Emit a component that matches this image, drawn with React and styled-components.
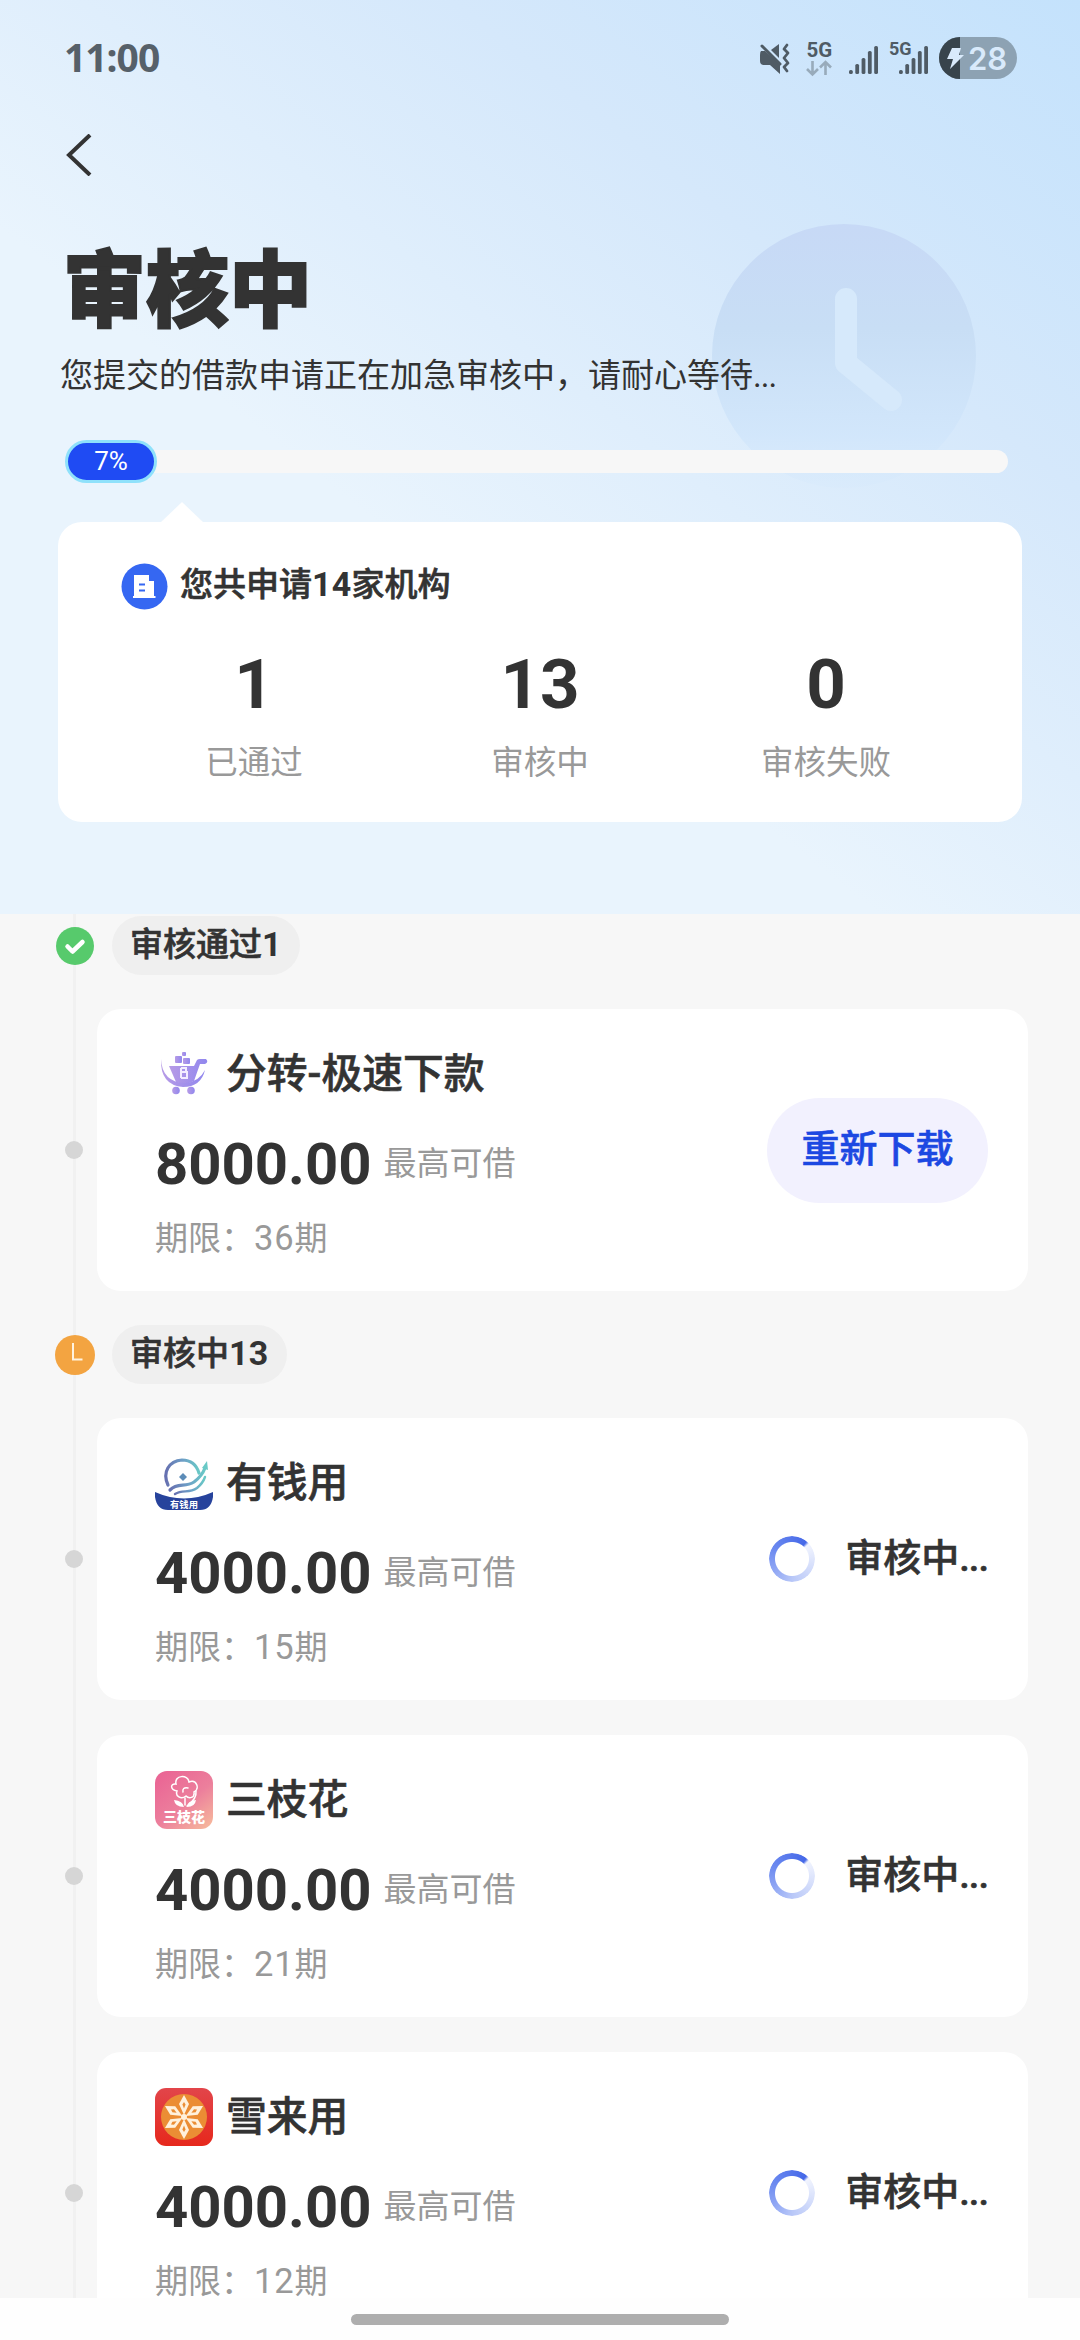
import styled, { createGlobalStyle } from "styled-components";

const GlobalStyle = createGlobalStyle`
  * {
    box-sizing: border-box;
  }
  body {
    margin: 0;
    background-color: #f6f6f6;
    color: #333;
    font-family: Roboto, "Noto Sans CJK SC", sans-serif;
  }
`;

const Page = styled.div`
  display: flex;
  flex-direction: column;
  width: 1080px;
  height: 2340px;
  overflow: hidden;
`;

const Header = styled.header`
  position: relative;
  flex: none;
  height: 914px;
  padding: 0 58px;
  background: linear-gradient(218deg, #c4e2fc 0%, #d5e8fb 28%, #e9f4fd 61%);
`;

const StatusBar = styled.div`
  display: flex;
  align-items: center;
  justify-content: space-between;
  height: 116px;
  padding: 0 5px 0 6px;
`;

const Time = styled.span`
  margin-top: -3px;
  color: #566069;
  font-family: "Noto Sans", sans-serif;
  font-size: 39px;
  font-weight: 700;
  letter-spacing: -1px;
`;

const BackButton = styled.button`
  display: block;
  height: 42px;
  margin-top: 18px;
  padding: 0 0 0 8px;
  border: 0;
  background: none;
  svg {
    display: block;
  }
`;

const Title = styled.h1`
  position: relative;
  margin: 55px 0 0 5px;
  font-family: "Noto Sans CJK SC", sans-serif;
  font-size: 83px;
  font-weight: 900;
  line-height: 106px;
  -webkit-text-stroke: 2px #333;
`;

const SubTitle = styled.p`
  position: relative;
  margin: 14px 0 0 2px;
  font-size: 33px;
  line-height: 50px;
  white-space: nowrap;
`;

const Dots = styled.span`
  letter-spacing: -1px;
`;

const HeaderClock = styled.svg`
  position: absolute;
  left: 712px;
  top: 224px;
`;

const Progress = styled.div`
  position: relative;
  display: flex;
  align-items: center;
  height: 43px;
  margin: 39px 14px 0 7px;
`;

const ProgressTrack = styled.div`
  flex: 1;
  height: 23px;
  margin-left: -30px;
  border-radius: 12px;
  background-color: #f7f7f7;
`;

const ProgressValue = styled.div`
  position: relative;
  z-index: 1;
  width: 92px;
  height: 43px;
  border: 3px solid #8fe1fb;
  border-radius: 22px;
  background-color: #1f4bf3;
  color: #fff;
  font-size: 26px;
  line-height: 37px;
  text-align: center;
`;

const Summary = styled.section`
  position: relative;
  height: 300px;
  margin-top: 39px;
  padding: 36px 53px 0;
  border-radius: 24px;
  background-color: #fff;
  &::before {
    content: "";
    position: absolute;
    left: 103px;
    top: -20px;
    border: solid transparent;
    border-width: 0 21px 20px;
    border-bottom-color: #fff;
  }
`;

const SummaryTitle = styled.h2`
  display: flex;
  align-items: center;
  gap: 12px;
  margin: 0;
  padding-left: 10px;
  font-size: 33px;
  font-weight: 500;
  line-height: 50px;
  -webkit-text-stroke: 0.6px;
  svg {
    margin-top: 5px;
  }
`;

const Bold = styled.b`
  font-size: 1.03em;
  font-weight: 700;
  letter-spacing: 0.3px;
  -webkit-text-stroke: 0;
`;

const Stats = styled.div`
  display: grid;
  grid-template-columns: repeat(3, 1fr);
  margin-top: 30px;
  text-align: center;
`;

const StatNumber = styled.div`
  font-size: 69px;
  font-weight: 700;
  line-height: 90px;
`;

const StatLabel = styled.div`
  margin-top: 8px;
  color: #999;
  font-size: 32.5px;
  line-height: 50px;
`;

const Timeline = styled.main`
  position: relative;
  flex: none;
  height: 1384px;
  padding-top: 2px;
  overflow: hidden;
  background: linear-gradient(#f1f1f1, #f1f1f1) 73px 0 / 3px 100% no-repeat #f7f7f7;
`;

const StepRow = styled.div`
  display: flex;
  align-items: center;
  height: 59px;
  padding-left: 55px;
`;

const StepIcon = styled.span`
  display: flex;
  width: 40px;
  margin-right: 17px;
`;

const StepPill = styled.div`
  height: 59px;
  padding: 0 18px;
  border-radius: 30px;
  background-color: #efefef;
  font-size: 33px;
  font-weight: 500;
  line-height: 57px;
  -webkit-text-stroke: 0.6px;
`;

const Items = styled.div`
  display: flex;
  flex-direction: column;
  gap: 35px;
  padding: 34px 0;
`;

const ItemRow = styled.div`
  display: flex;
  align-items: center;
  gap: 14px;
  padding: 0 52px 0 65px;
`;

const ItemDot = styled.span`
  width: 18px;
  height: 18px;
  border-radius: 50%;
  background-color: #d6d6d6;
`;

const Card = styled.article`
  display: flex;
  flex: 1;
  align-items: center;
  justify-content: space-between;
  height: 282px;
  padding: 0 40px 0 58px;
  border-radius: 24px;
  background-color: #fff;
`;

const CardInfo = styled.div`
  padding-top: 7px;
`;

const CardName = styled.h3`
  display: flex;
  align-items: center;
  gap: 13px;
  margin: 0;
  font-size: 40.8px;
  font-weight: 500;
  line-height: 58px;
  -webkit-text-stroke: 0.6px;
  svg {
    -webkit-text-stroke: 0;
  }
`;

const AmountRow = styled.div`
  display: flex;
  align-items: center;
  gap: 12px;
  height: 70px;
  margin-top: 26px;
`;

const Amount = styled.span`
  font-size: 58px;
  font-weight: 700;
`;

const Muted = styled.span`
  color: #999;
  font-size: 33px;
  line-height: 48px;
`;

const Term = styled(Muted)`
  display: block;
  margin-top: 15px;
  span {
    font-size: 34.5px;
    letter-spacing: 0.8px;
  }
`;

const DownloadButton = styled.button`
  width: 221px;
  height: 105px;
  padding: 0 0 9px;
  border: 0;
  border-radius: 53px;
  background-color: #f2f1fe;
  color: #1c48e2;
  font-family: inherit;
  font-size: 38px;
  font-weight: 500;
  -webkit-text-stroke: 0.6px;
`;

const Reviewing = styled.div`
  display: flex;
  align-items: center;
  gap: 30px;
  font-size: 38px;
  font-weight: 500;
  line-height: 58px;
  -webkit-text-stroke: 0.6px;
`;

const Spinner = styled.span`
  width: 46px;
  height: 46px;
  border-radius: 50%;
  background: conic-gradient(
    from 48deg,
    #f1f4fe 0deg,
    #b9c8f8 130deg,
    #8fa6f4 190deg,
    #6c8af0 250deg,
    #4568e8 352deg,
    #f1f4fe 360deg
  );
  mask: radial-gradient(circle, transparent 16.5px, #000 17.5px);
`;

const ReviewText = styled.span`
  margin-top: -3px;
`;

const BottomBar = styled.footer`
  display: flex;
  flex: 1;
  align-items: center;
  justify-content: center;
  padding-top: 1px;
  background-color: #fefefe;
`;

const HomeIndicator = styled.span`
  width: 378px;
  height: 11px;
  border-radius: 6px;
  background-color: #aeaeae;
`;

const signalBars = [0, 1, 2, 3, 4];

function SignalBars({ x }) {
  return signalBars.map((i) => (
    <rect
      key={i}
      x={x + i * 6.3}
      y={[33, 27, 21, 14, 9][i]}
      width={3.8}
      height={[4, 10, 16, 23, 28][i]}
      rx="1.6"
      fill="#4f5b65"
    />
  ));
}

function StatusIcons() {
  return (
    <svg width="259" height="42" viewBox="0 0 259 42">
      {/* muted speaker */}
      <path d="M3 14h4l15 13v10l-10-9H6q-4 0-4-4v-6q0-3 1-4z" fill="#4f5b65" />
      <path d="M13 13l8-6v14z" fill="#4f5b65" />
      <path d="M4 9l18 18" stroke="#4f5b65" strokeWidth="3" strokeLinecap="round" />
      <path
        d="M29 8l-3 4 4 4-4 5 4 5-4 4 3 4"
        fill="none"
        stroke="#4f5b65"
        strokeWidth="2.800"
        strokeLinecap="round"
        strokeLinejoin="round"
      />
      <text x="48.500" y="20" fontFamily="Roboto" fontSize="20.500" fontWeight="700" fill="#4f5b65">
        5G
      </text>
      <path
        d="M54.500 24v13M49 32l5.500 5.500L60 32M67.500 38V25M62 30.500l5.500-5.500 5.500 5.500"
        fill="none"
        stroke="#98abbb"
        strokeWidth="2.600"
      />
      <SignalBars x={91} />
      <text x="131" y="18" fontFamily="Roboto" fontSize="18" fontWeight="700" fill="#4f5b65">
        5G
      </text>
      <SignalBars x={141} />
      {/* battery */}
      <rect x="181" y="0" width="78" height="42" rx="21" fill="#8da2b3" />
      <path d="M202 0a21 21 0 0 0 0 42z" fill="#38444c" />
      <path d="M194 11h9l-2 7h5L192 32l3-10h-6z" fill="#d9eafb" />
      <text x="210" y="32.500" fontFamily="Inter" fontSize="31" fontWeight="600" fill="#d9eafb">
        28
      </text>
    </svg>
  );
}

function ClockArt() {
  return (
    <HeaderClock width="264" height="264" viewBox="0 0 264 264">
      <defs>
        <linearGradient id="clockFade" x1="0" y1="0" x2="0" y2="1">
          <stop offset="0" stopColor="#c7d9f6" />
          <stop offset="0.4" stopColor="#c8def5" />
          <stop offset="0.8" stopColor="#d1e6fb" stopOpacity="0.9" />
          <stop offset="1" stopColor="#d6e9fb" stopOpacity="0.3" />
        </linearGradient>
      </defs>
      <circle cx="132" cy="132" r="132" fill="url(#clockFade)" />
      <path
        d="M134 75v64l45 37"
        fill="none"
        stroke="#d6e9fb"
        strokeWidth="22"
        strokeLinecap="round"
        strokeLinejoin="round"
      />
    </HeaderClock>
  );
}

function CartLogo() {
  return (
    <svg width="58" height="58" viewBox="0 0 58 58">
      <defs>
        <linearGradient id="cart" x1="0" x2="1">
          <stop offset="0" stopColor="#b79be6" />
          <stop offset="1" stopColor="#9187ee" />
        </linearGradient>
      </defs>
      <g fill="url(#cart)">
        <path d="M14 21h25l3-6q1-1 3-1h6q3 3-1 5h-5l-6 17q-9 5-18 1z" />
        <rect x="20" y="11" width="7" height="7" rx="1" />
        <rect x="28" y="13" width="7" height="6" rx="1" />
        <rect x="27" y="7" width="4" height="4" rx="1" />
        <path d="M6 14q1 23 24 24 14-1 20-13-4 17-22 17Q5 40 6 14z" />
        <circle cx="21" cy="45.500" r="3.800" />
        <circle cx="36" cy="45.500" r="3.800" />
      </g>
      <path
        d="M26 23v10M26 23h5v4h-4 5v6h-6"
        fill="none"
        stroke="#f3edff"
        strokeWidth="2"
      />
    </svg>
  );
}

function CoinLogo() {
  return (
    <svg width="58" height="58" viewBox="0 0 58 58">
      <defs>
        <linearGradient id="coin" x1="0" x2="1">
          <stop offset="0" stopColor="#6670b0" />
          <stop offset="0.5" stopColor="#6d9ec6" />
          <stop offset="1" stopColor="#69c9c6" />
        </linearGradient>
      </defs>
      <g fill="none" stroke="url(#coin)" strokeLinecap="round">
        <path d="M13 31C7 18 14 7 27 6q13 0 17 13" strokeWidth="3.200" />
        <path d="M15 36c8-8 15-2 24-8q8-6 11-14" strokeWidth="3.200" />
        <path d="M20 40c8-5 14 0 22-6q6-5 8-11" strokeWidth="2.400" />
      </g>
      <path d="M47 14l5-7 1 9z" fill="#69c9c6" />
      <path d="M28 19l4 4-4 4-4-4z" fill="#5c8cb8" />
      <path d="M0 38q29 13 58 0v5q-2 13-13 13H13Q2 56 0 43z" fill="#27439c" />
      <text
        x="29"
        y="54"
        textAnchor="middle"
        fontFamily="Noto Sans CJK SC"
        fontSize="9.300"
        fontWeight="700"
        fill="#fff"
      >
        有钱用
      </text>
    </svg>
  );
}

function FlowerLogo() {
  return (
    <svg width="58" height="58" viewBox="0 0 58 58">
      <defs>
        <linearGradient id="flower" x1="0.2" y1="0" x2="1" y2="1">
          <stop offset="0" stopColor="#ea6695" />
          <stop offset="0.5" stopColor="#ec7f9c" />
          <stop offset="1" stopColor="#f7bd9c" />
        </linearGradient>
      </defs>
      <rect width="58" height="58" rx="12" fill="url(#flower)" />
      <g fill="none" stroke="#fff" strokeWidth="1.500" strokeLinecap="round">
        <path d="M21 13c-2-9 12-10 13-2 8-3 11 7 5 10 1 6-5 7-8 4-5 4-11 0-9-5-7-1-7-8-1-7z" />
        <path d="M33 17q-6-1-5 4M30 27v7M41 20q1 8-9 15" />
      </g>
      <path d="M29 36q-1-6-10-7 1 7 10 7zM32 36q0-6 9-7-1 7-9 7z" fill="#fff" />
      <text
        x="29"
        y="50.500"
        textAnchor="middle"
        fontFamily="Noto Sans CJK SC"
        fontSize="14"
        fontWeight="900"
        fill="#fff"
      >
        三枝花
      </text>
    </svg>
  );
}

function SnowLogo() {
  return (
    <svg width="58" height="58" viewBox="0 0 58 58">
      <defs>
        <linearGradient id="snow" x1="0" y1="0" x2="0" y2="1">
          <stop offset="0" stopColor="#e2454a" />
          <stop offset="1" stopColor="#e6281c" />
        </linearGradient>
      </defs>
      <rect width="58" height="58" rx="11" fill="url(#snow)" />
      <circle cx="29" cy="29" r="23" fill="#eb8d34" />
      {[0, 60, 120, 180, 240, 300].map((deg) => (
        <g key={deg} transform={`rotate(${deg} 29 29)`}>
          <path d="M29 7l5 9-5 11-5-11z" fill="#fff1dc" />
          <path d="M29 14l1.600 2.500-1.600 4-1.600-4z" fill="#eb8d34" />
        </g>
      ))}
      <circle cx="29" cy="29" r="3" fill="#fff1dc" />
    </svg>
  );
}

function PassedIcon() {
  return (
    <svg width="40" height="40" viewBox="0 0 40 40">
      <circle cx="20" cy="20" r="19" fill="#57ca6c" />
      <path
        d="M12.500 20.500l5 5 10-9.500"
        fill="none"
        stroke="#fff"
        strokeWidth="4.500"
        strokeLinecap="round"
        strokeLinejoin="round"
      />
    </svg>
  );
}

function PendingIcon() {
  return (
    <svg width="40" height="40" viewBox="0 0 40 40">
      <circle cx="20" cy="20" r="20" fill="#f3a441" />
      <path d="M18 8v16.500h9.500" fill="none" stroke="#fff3df" strokeWidth="2" />
    </svg>
  );
}

const stats = [
  { value: 1, label: "已通过" },
  { value: 13, label: "审核中" },
  { value: 0, label: "审核失败" },
];

const steps = [
  {
    name: "审核通过",
    count: 1,
    Icon: PassedIcon,
    items: [
      { name: "分转-极速下款", amount: "8000.00", term: 36, Logo: CartLogo, passed: true },
    ],
  },
  {
    name: "审核中",
    count: 13,
    Icon: PendingIcon,
    items: [
      { name: "有钱用", amount: "4000.00", term: 15, Logo: CoinLogo },
      { name: "三枝花", amount: "4000.00", term: 21, Logo: FlowerLogo },
      { name: "雪来用", amount: "4000.00", term: 12, Logo: SnowLogo },
    ],
  },
];

function LoanItem({ item }) {
  const { name, amount, term, Logo, passed } = item;
  return (
    <ItemRow>
      <ItemDot />
      <Card>
        <CardInfo>
          <CardName>
            <Logo />
            {name}
          </CardName>
          <AmountRow>
            <Amount>{amount}</Amount>
            <Muted>最高可借</Muted>
          </AmountRow>
          <Term>
            期限：<span>{term}</span>期
          </Term>
        </CardInfo>
        {passed ? (
          <DownloadButton>重新下载</DownloadButton>
        ) : (
          <Reviewing>
            <Spinner />
            <ReviewText>
              审核中<Dots>...</Dots>
            </ReviewText>
          </Reviewing>
        )}
      </Card>
    </ItemRow>
  );
}

function App() {
  return (
    <Page>
      <GlobalStyle />
      <Header>
        <ClockArt />
        <StatusBar>
          <Time>11:00</Time>
          <StatusIcons />
        </StatusBar>
        <BackButton>
          <svg width="26" height="42" viewBox="0 0 26 42">
            <path d="M24 1L3 21l21 20" fill="none" stroke="#333" strokeWidth="4" />
          </svg>
        </BackButton>
        <Title>审核中</Title>
        <SubTitle>
          您提交的借款申请正在加急审核中，请耐心等待<Dots>...</Dots>
        </SubTitle>
        <Progress>
          <ProgressValue>7%</ProgressValue>
          <ProgressTrack />
        </Progress>
        <Summary>
          <SummaryTitle>
            <svg width="47" height="47" viewBox="0 0 47 47">
              <circle cx="23.500" cy="23.500" r="23" fill="#3567f2" />
              <path d="M13 12h15v6h5v15h1.500v2H12v-2h1z" fill="#fff" />
              <path d="M18 21.500h6M18 27.500h6" stroke="#3567f2" strokeWidth="2" />
            </svg>
            <span>
              您共申请<Bold>14</Bold>家机构
            </span>
          </SummaryTitle>
          <Stats>
            {stats.map((stat) => (
              <div key={stat.label}>
                <StatNumber>{stat.value}</StatNumber>
                <StatLabel>{stat.label}</StatLabel>
              </div>
            ))}
          </Stats>
        </Summary>
      </Header>
      <Timeline>
        {steps.map(({ name, count, Icon, items }) => (
          <section key={name}>
            <StepRow>
              <StepIcon>
                <Icon />
              </StepIcon>
              <StepPill>
                {name}
                <Bold>{count}</Bold>
              </StepPill>
            </StepRow>
            <Items>
              {items.map((item) => (
                <LoanItem key={item.name} item={item} />
              ))}
            </Items>
          </section>
        ))}
      </Timeline>
      <BottomBar>
        <HomeIndicator />
      </BottomBar>
    </Page>
  );
}

export default App;
